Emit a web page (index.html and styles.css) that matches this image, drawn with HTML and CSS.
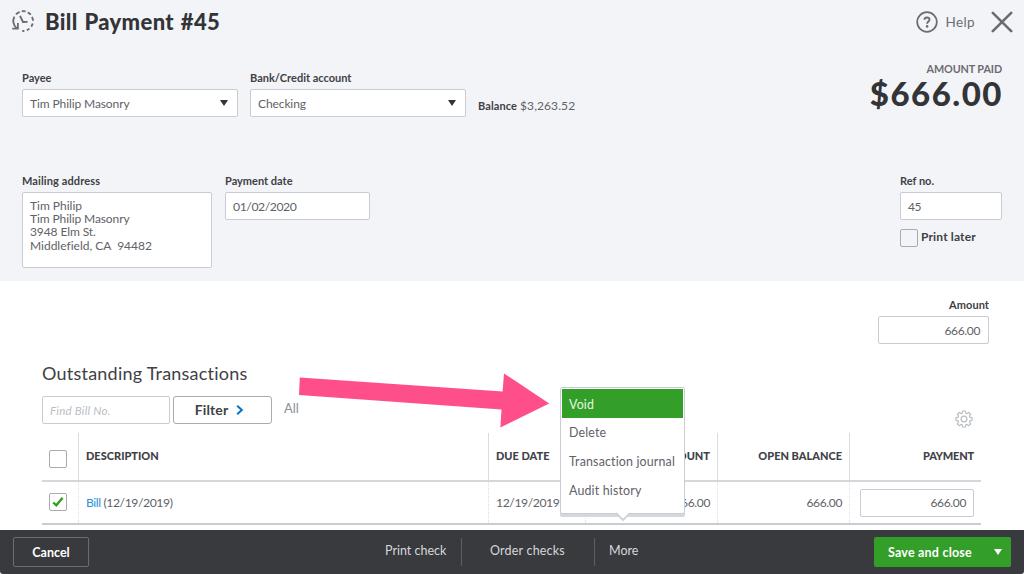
FILE: index.html
```html
<!DOCTYPE html>
<html lang="en">
<head>
<meta charset="utf-8">
<title>Bill Payment #45</title>
<link rel="stylesheet" href="styles.css">
</head>
<body>
<div class="app">
  <section class="summary">
    <header class="topbar">
      <svg class="history" width="24" height="24" viewBox="0 0 24 24" fill="none" stroke="#6b6c72" stroke-width="1.9">
        <path d="M6 19.5C2.2 16.5 1.3 11.5 3.4 7.6M5 5.4A10 10 0 0 1 8.6 2.9M10.8 2.2A10 10 0 0 1 14.6 2.4M16.8 3.3A10 10 0 0 1 19.8 5.7M21 7.8A10 10 0 0 1 22 11.8M21.7 14.4A10 10 0 0 1 20.2 17.6M18.4 19.6A10 10 0 0 1 15.8 21.2M13.4 21.9A10 10 0 0 1 11.2 21.9"/>
        <path d="M9 6.8L12 13L16.6 12.9"/>
        <path d="M6.9 14V19.6H1.2" stroke-width="1.8"/>
      </svg>
      <h1 class="title">Bill Payment #45</h1>
      <svg class="help-icon" width="22" height="22" viewBox="0 0 22 22" fill="none" stroke="#6b6c72" stroke-width="1.7">
        <circle cx="11" cy="11" r="9.8"/>
        <path d="M8.5 8.8C8.6 5.6 13.6 5.7 13.5 8.8C13.4 10.6 11.1 10.6 11.1 12.8" stroke-width="1.9"/>
        <circle cx="11.1" cy="15.4" r="1.3" fill="#6b6c72" stroke="none"/>
      </svg>
      <span class="help">Help</span>
      <svg class="close" width="22" height="22" viewBox="0 0 22 22" stroke="#6b6c72" stroke-width="2.6" stroke-linecap="round"><path d="M1.8 1.8L20.2 20.2M20.2 1.8L1.8 20.2"/></svg>
    </header>
    <div class="row account-row">
      <div class="field payee"><label class="label">Payee</label><div class="box select"><span class="t-name">Tim Philip Masonry</span><i class="caret"></i></div></div>
      <div class="field bank"><label class="label">Bank/Credit account</label><div class="box select"><span class="t-name">Checking</span><i class="caret"></i></div></div>
      <div class="balance"><b>Balance</b><span>$3,263.52</span></div>
      <div class="paid"><div class="paid-label">AMOUNT PAID</div><div class="paid-value">$666.00</div></div>
    </div>
    <div class="row details-row">
      <div class="field mailing"><label class="label l-mail">Mailing address</label><div class="box address"><span>Tim Philip</span><span class="t-name">Tim Philip Masonry</span><span class="t-name">3948 Elm St.</span><span>Middlefield, CA &nbsp;94482</span></div></div>
      <div class="field date"><label class="label">Payment date</label><div class="box"><span class="t-date">01/02/2020</span></div></div>
      <div class="field ref"><label class="label">Ref no.</label><div class="box"><span class="num">45</span></div>
        <div class="print"><i class="check"></i><b>Print later</b></div></div>
    </div>
  </section>

  <main class="main">
    <div class="amount"><label class="label">Amount</label><div class="box right"><span class="num">666.00</span></div></div>
    <h2 class="heading">Outstanding Transactions</h2>
    <div class="tools">
      <div class="box search"><span>Find Bill No.</span></div>
      <div class="filter"><span>Filter</span><svg width="8" height="12" viewBox="0 0 8 12" fill="none" stroke="#0077c5" stroke-width="2"><path d="M1.2 1.8L5.8 6L1.2 10.2"/></svg></div>
      <span class="all">All</span>
      <svg class="gear" width="18" height="18" viewBox="0 0 18 18" fill="none" stroke="#b9bdc5" stroke-width="1.2">
        <circle cx="9" cy="9" r="2.9"/>
        <path d="M7.6 1H10.4L10.8 3.1L12.1 3.7L13.8 2.4L15.7 4.3L14.4 6L14.9 7.2L17 7.6V10.4L14.9 10.8L14.4 12.1L15.7 13.8L13.8 15.7L12.1 14.4L10.8 14.9L10.4 17H7.6L7.2 14.9L6 14.4L4.2 15.7L2.3 13.8L3.6 12.1L3.1 10.8L1 10.4V7.6L3.1 7.2L3.6 6L2.3 4.3L4.2 2.4L6 3.6L7.2 3.1Z" stroke-linejoin="round"/>
      </svg>
    </div>
    <div class="table">
      <div class="tr head">
        <div class="td sel"><i class="check"></i></div>
        <div class="td"><span>DESCRIPTION</span></div>
        <div class="td"><span>DUE DATE</span></div>
        <div class="td end"><span>AMOUNT</span></div>
        <div class="td end"><span>OPEN BALANCE</span></div>
        <div class="td end"><span class="h-pay">PAYMENT</span></div>
      </div>
      <div class="tr data">
        <div class="td sel"><i class="check"><svg width="12" height="12" viewBox="0 0 12 12" fill="none" stroke="#2ca01c" stroke-width="2.3"><path d="M1.2 6.5L4.3 9.3L10.6 1.8"/></svg></i></div>
        <div class="td"><span class="t-date"><a class="link">Bill</a> (12/19/2019)</span></div>
        <div class="td"><span class="t-date">12/19/2019</span></div>
        <div class="td end"><span class="num">666.00</span></div>
        <div class="td end"><span class="num">666.00</span></div>
        <div class="td end pay"><div class="box right"><span class="num">666.00</span></div></div>
      </div>
    </div>
  </main>

  <footer class="footer">
    <div class="cancel"><span>Cancel</span></div>
    <nav class="actions"><span class="action print-check">Print check</span><span class="action order-checks">Order checks</span><span class="action more">More</span></nav>
    <div class="save"><span>Save and close</span><i class="caret light"></i></div>
  </footer>

  <div class="menu">
    <div class="item active">Void</div>
    <div class="item">Delete</div>
    <div class="item">Transaction journal</div>
    <div class="item">Audit history</div>
    <svg class="tail" width="14" height="10" viewBox="0 0 14 10"><path d="M0 2.5L7 9.5L14 2.5Z" fill="#d4d7dc"/><path d="M0 0H14L7 7Z" fill="#fff"/><path d="M0 .5L7 7.5L14 .5" fill="none" stroke="#c9ccd4"/></svg>
  </div>
  <svg class="arrow" width="252" height="56" viewBox="0 0 252 56"><path d="M1.8 4.4L204.6 18.4L206 .4L251.2 30.5L202.4 54.5L203.5 36.4L1 21.9Z" fill="#ff4f8b"/></svg>
</div>
</body>
</html>
```
FILE: styles.css
```css
* { box-sizing: border-box; }
body { margin: 0; font-family: Lato, "Liberation Sans", sans-serif; font-size: 12px; color: #606267; background: #fff; font-variant-ligatures: none; }
h1, h2 { margin: 0; }
span, b, .item, .label { white-space: nowrap; }
.app { position: relative; width: 1024px; height: 574px; display: flex; flex-direction: column; overflow: hidden; }

.summary { height: 281px; flex: none; background: #f3f4f8; padding: 0 22px; }
.topbar { height: 44px; margin: 0 -11px; display: flex; align-items: center; }
.history { margin: 0 10px 2px 0; }
.title { font-size: 22px; line-height: 44px; font-weight: 900; color: #333437; flex: 1; letter-spacing: 0.35px; word-spacing: 1.2px; }
.help-icon { margin-right: 8px; }
.help { font-size: 13.5px; letter-spacing: .35px; color: #6b6c72; margin: -1px 16px 0 0; }
.close { margin-top: -1px; }
.row { display: flex; align-items: flex-start; }
.account-row { padding-top: 27px; height: 130px; }
.label { display: block; height: 14px; line-height: 13px; margin-bottom: 4px; font-size: 11px; font-weight: 700; color: #404146; }
.l-mail { letter-spacing: .12px; }
.box { height: 28px; border: 1px solid #c9ccd4; border-radius: 2px; background: #fff; padding: 0 7px; display: flex; align-items: center; }
.right { justify-content: flex-end; }
.select { justify-content: space-between; padding-right: 9px; }
.caret { border: 4px solid transparent; border-top: 6px solid #333437; border-bottom: 0; }
.t-name { letter-spacing: -.1px; }
.t-date { letter-spacing: -.42px; font-size: 12.2px; }
.num { letter-spacing: -.35px; }
.payee { width: 216px; margin-right: 12px; }
.bank { width: 216px; margin-right: 12px; }
.balance { display: flex; gap: 3px; align-items: baseline; margin-top: 27px; line-height: 16px; letter-spacing: .1px; }
.balance b { font-size: 11px; color: #404146; }
.paid { margin-left: auto; text-align: right; margin-top: -9px; }
.paid-label { font-size: 10.8px; line-height: 14px; font-weight: 700; color: #6b6c72; letter-spacing: -.1px; }
.paid-value { font-size: 33px; line-height: 34px; font-weight: 900; color: #333437; letter-spacing: 1.5px; margin-right: -1px; }
.mailing { width: 190px; margin-right: 13px; }
.address { height: 76px; flex-direction: column; align-items: flex-start; line-height: 13.2px; padding-top: 6px; }
.date { width: 145px; }
.ref { width: 102px; margin-left: auto; }
.print { display: flex; align-items: center; gap: 3px; margin-top: 9px; }
.print b { line-height: 18px; margin-top: -3px; font-size: 12px; letter-spacing: .15px; color: #404146; }
.check { flex: none; width: 18px; height: 18px; border: 1px solid #a9abb3; border-radius: 2px; display: flex; align-items: center; justify-content: center; }

.main { flex: 1; min-height: 0; padding: 17px 43px 0 42px; }
.amount { width: 111px; margin: 0 -8px 0 auto; }
.amount .label { text-align: right; letter-spacing: .05px; }
.amount .box { padding-right: 8px; }
.heading { font-size: 18px; line-height: 24px; font-weight: 400; color: #404146; margin-top: 17px; letter-spacing: .23px; }
.tools { display: flex; align-items: center; height: 28px; margin-top: 11px; }
.search { width: 128px; margin-right: 3px; }
.search span { font-style: italic; color: #babec5; font-size: 11.5px; letter-spacing: .25px; }
.filter { width: 99px; height: 28px; border: 1px solid #a9abb3; border-radius: 3px; display: flex; align-items: center; justify-content: center; gap: 8px; padding: 0 6px 1px 0; font-size: 14px; letter-spacing: .15px; font-weight: 700; color: #404146; }
.all { color: #8d9096; font-size: 13px; margin: -4px 0 0 12px; }
.gear { margin: 18px 8px 0 auto; }
.table { margin-top: 9px; }
.tr { display: grid; grid-template-columns: 36px 410px 97px 132px 132px 132px; }
.td { display: flex; align-items: center; padding: 0 7px; border-left: 1px solid #d9dce2; min-width: 0; }
.td.sel { border: 0; padding: 0 0 0 7px; }
.end { justify-content: flex-end; }
.head { height: 49px; border-bottom: 2px solid #d4d7dc; font-size: 11px; font-weight: 900; color: #404146; }
.head .td { padding-bottom: 2px; }
.head .td.sel { padding: 4px 0 0 7px; }
.h-pay { letter-spacing: -.2px; }
.data { height: 43px; border-bottom: 2px solid #c9ccd0; }
.data .td { border-left-style: dotted; padding-bottom: 1px; }
.data .td.sel { border: 0; }
.pay .box { width: 114px; margin-top: 1px; }
.link { color: #2f8fd6; }

.footer { height: 44px; flex: none; background: #393a3d; border-radius: 0 0 3px 3px; padding: 0 13px; display: flex; align-items: center; color: #d4d7dc; font-size: 12.5px; }
.cancel { width: 76px; height: 30px; border: 1px solid #6b6c72; border-radius: 2px; display: flex; align-items: center; justify-content: center; color: #fff; font-weight: 700; }
.actions { display: flex; margin-left: 282px; }
.action { height: 28px; line-height: 26px; padding: 0 14px; border-right: 1px solid #5c5e63; }
.print-check { width: 91px; }
.order-checks { width: 133px; padding-left: 28px; letter-spacing: .2px; }
.more { border: 0; }
.save { margin-left: auto; width: 137px; height: 30px; border-radius: 2px; background: #2ca01c; background: #339e28; display: flex; align-items: center; justify-content: space-between; padding: 0 9px 0 14px; color: #fff; font-weight: 700; letter-spacing: .2px; }
.light { border-top-color: #fff; }

.menu { position: absolute; left: 560px; top: 387px; width: 125px; height: 127px; background: #fff; border: 1px solid #c9ccd4; border-radius: 2px; box-shadow: 0 3px 0 #d4d7dc; padding: 1px; }
.item { height: 29px; line-height: 30px; padding-left: 7px; font-size: 12.4px; letter-spacing: .17px; }
.active { background: #339e28; color: #e8f5e6; height: 29px; line-height: 31px; }
.tail { position: absolute; left: 55px; top: 124px; }
.arrow { position: absolute; left: 298px; top: 373px; }
```
